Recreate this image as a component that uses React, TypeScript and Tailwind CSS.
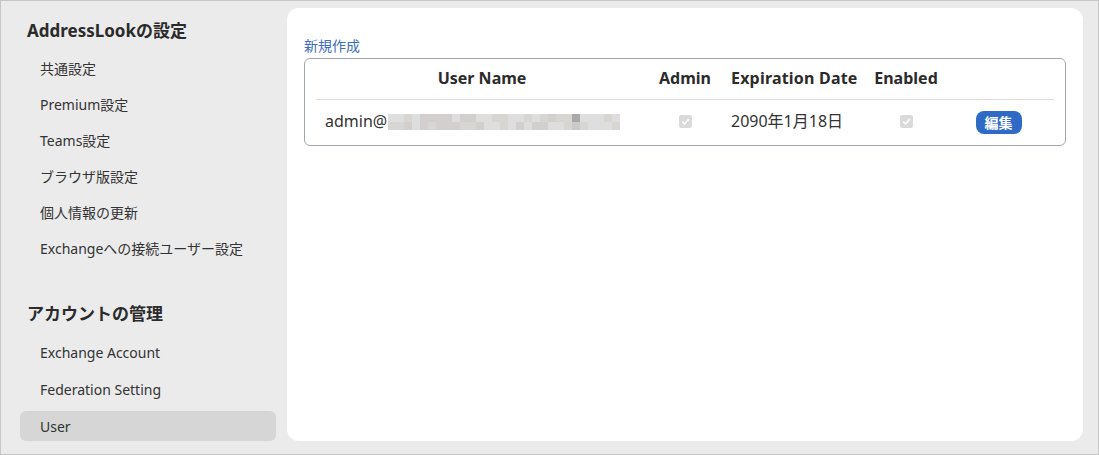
import React from "react";

const FONT = { fontFamily: '"Noto Sans", "Noto Sans CJK JP", sans-serif' };

const group1 = ["共通設定", "Premium設定", "Teams設定", "ブラウザ版設定", "個人情報の更新", "Exchangeへの接続ユーザー設定"];
const group2 = ["Exchange Account", "Federation Setting", "User"];

const palette = ["#dedede", "#e4e4e4", "#d2d2d2", "#c9ccd6", "#d8d6d2", "#e8e8e8", "#cfcfcf", "#dadde2", "#d4cfcf", "#c7c7c7", "#e0e2e4", "#f0f0f0"];
function mosaic() {
  const cells: { x: number; y: number; c: string }[] = [];
  let s = 7;
  for (let r = 0; r < 2; r++) {
    for (let i = 0; i < 29; i++) {
      s = (s * 1103515245 + 12345) % 2147483648;
      let c = palette[s % palette.length];
      if (r === 0 && i === 23) c = "#a9a9a9";
      if (r === 1 && i === 23) c = "#cacaca";
      cells.push({ x: i * 8, y: r * 8, c });
    }
  }
  return cells;
}

function Check() {
  return (
    <div className="w-[13px] h-[13px] rounded-[2px] bg-[#dadada] flex items-center justify-center">
      <svg width="9" height="9" viewBox="0 0 10 10">
        <path d="M1.5 5.2 L4 7.6 L8.6 2.4" fill="none" stroke="#ffffff" strokeWidth="1.8" />
      </svg>
    </div>
  );
}

export default function App() {
  const cells = mosaic();
  return (
    <div style={FONT} className="w-[1099px] h-[455px] border border-[#c6c6c6] bg-[#ebebeb] flex text-[#333333]">
      <aside className="w-[286px] pl-[19px] pr-[11px] pt-[18px] flex flex-col">
        <h2 className="text-[17px] font-bold leading-[24px] pl-[7px] text-[#2b2b2b]">AddressLookの設定</h2>
        <ul className="mt-[10px] flex flex-col gap-[6px]">
          {group1.map((t) => (
            <li key={t} className="h-[30px] flex items-center pl-[20px] text-[14px]">{t}</li>
          ))}
        </ul>
        <h2 className="mt-[39px] text-[17px] font-bold leading-[24px] pl-[7px] text-[#2b2b2b]">アカウントの管理</h2>
        <ul className="mt-[11px] flex flex-col gap-[7px]">
          {group2.map((t) => (
            <li
              key={t}
              className={
                t === "User"
                  ? "h-[30px] flex items-center pl-[20px] text-[14px] bg-[#d6d6d6] rounded-[6px]"
                  : "h-[30px] flex items-center pl-[20px] text-[14px]"
              }
            >
              {t}
            </li>
          ))}
        </ul>
      </aside>
      <main className="mt-[7px] w-[796px] h-[433px] bg-white rounded-[12px] px-[17px] pt-[28px]">
        <a className="block text-[14px] leading-[20px] text-[#3d6fbd] w-fit">新規作成</a>
        <div className="mt-[2px] border border-[#a3a8ae] rounded-[6px] px-[11px]">
          <div className="grid grid-cols-[332px_74px_144px_80px_108px] h-[41px] pb-[2px] items-center border-b border-[#dcdcdc] text-[16px] font-bold text-[#2b2b2b]">
            <div className="text-center">User Name</div>
            <div className="text-center">Admin</div>
            <div className="pl-[9px] tracking-[0.2px]">Expiration Date</div>
            <div className="text-center">Enabled</div>
            <div></div>
          </div>
          <div className="grid grid-cols-[332px_74px_144px_80px_108px] h-[45px] items-center text-[16px]">
            <div className="flex items-center pl-[9px] pb-[3px]">
              <span>admin@</span>
              <svg width="232" height="16" viewBox="0 0 232 16" className="ml-[1px] mt-[2px]">
                {cells.map((c, i) => (
                  <rect key={i} x={c.x} y={c.y} width="8" height="8" fill={c.c} />
                ))}
              </svg>
            </div>
            <div className="flex justify-center pb-[3px]"><Check /></div>
            <div className="pl-[9px] pb-[3px]">2090年1月18日</div>
            <div className="flex justify-center pb-[3px]"><Check /></div>
            <div className="flex justify-center pr-[3px]">
              <button className="h-[23px] px-[9px] rounded-[8px] bg-[#2f6bc6] text-white text-[14px] font-bold leading-none">編集</button>
            </div>
          </div>
        </div>
      </main>
    </div>
  );
}
